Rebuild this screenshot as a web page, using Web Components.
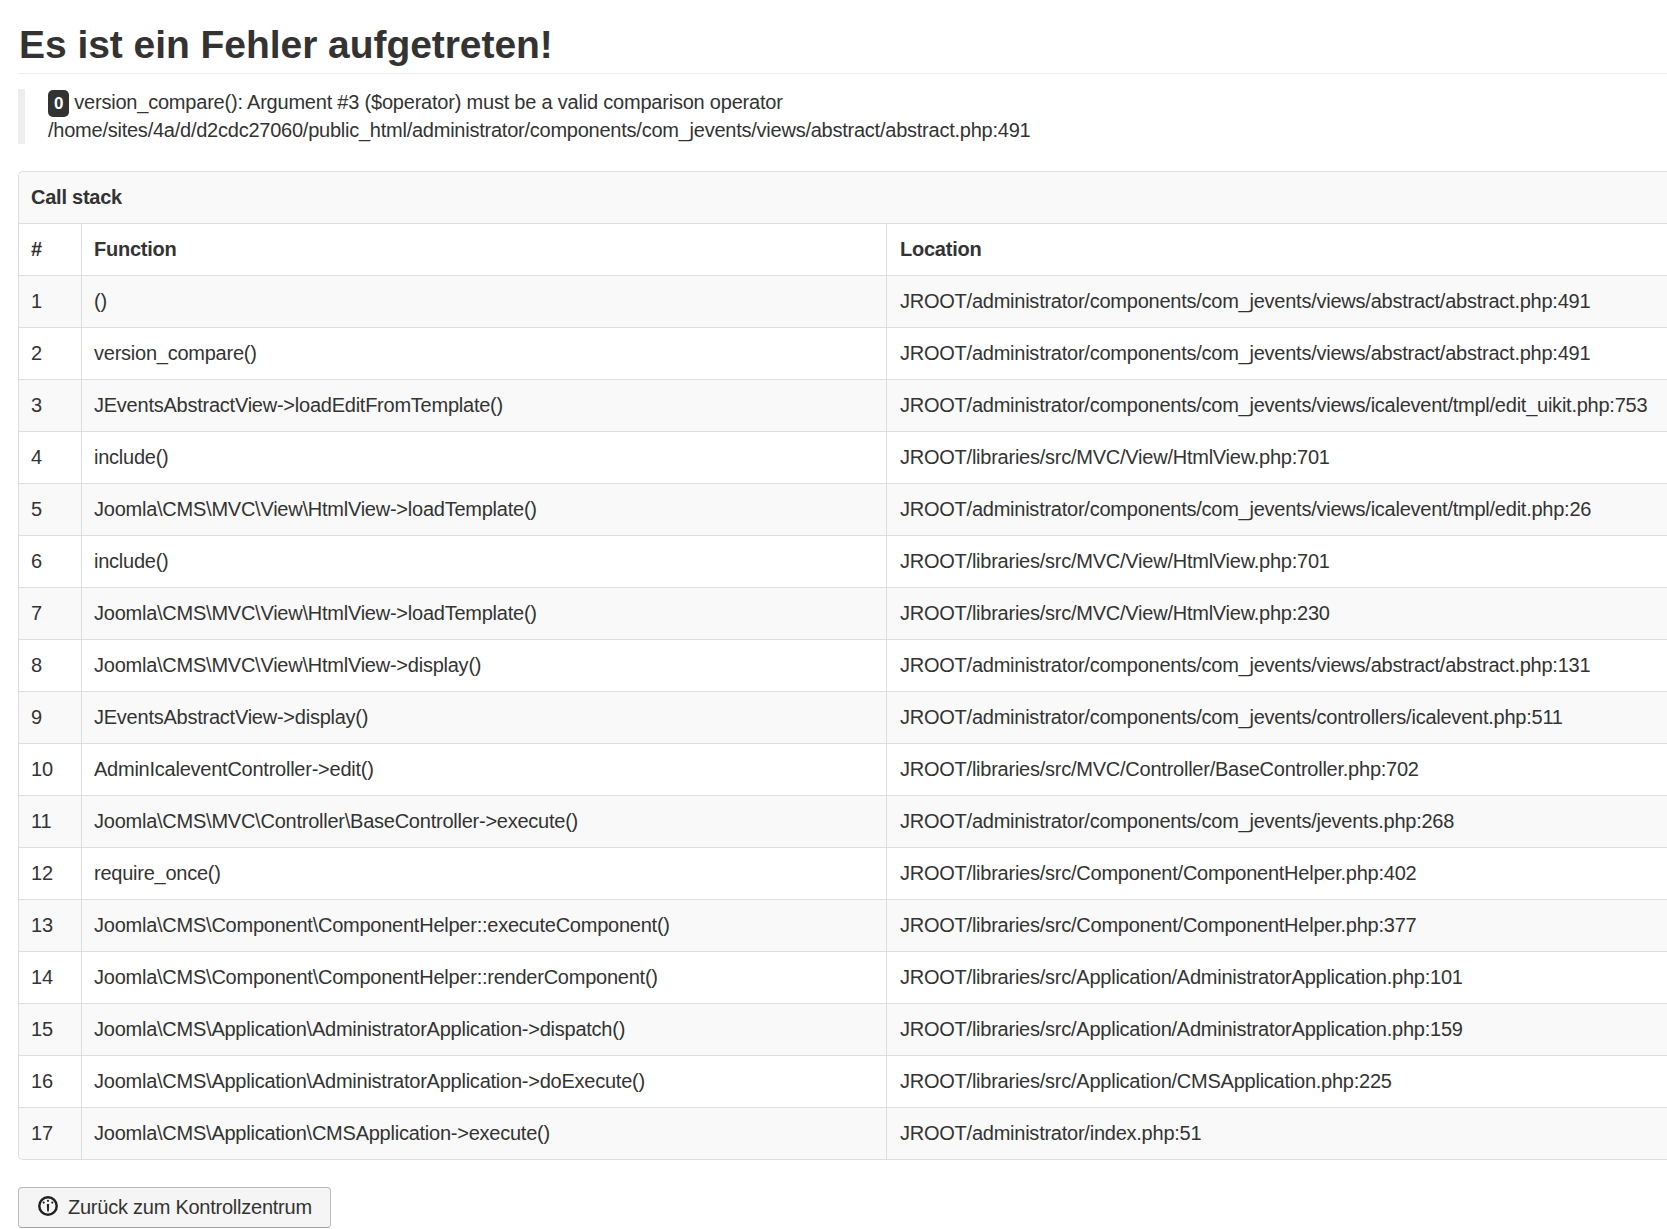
<!DOCTYPE html>
<html lang="de">
<head>
<meta charset="utf-8">
<title>Fehler</title>
<style>
  html { overflow: hidden; }
  body { margin: 0; padding: 0 0 0 18px; width: 1900px; background: #fff; color: #333; font-family: "Liberation Sans", Arial, sans-serif; font-size: 20px; line-height: 27px; letter-spacing: -0.24px; }
</style>
</head>
<body>
<error-heading>Es ist ein Fehler aufgetreten!</error-heading>
<error-message code="0" file="/home/sites/4a/d/d2cdc27060/public_html/administrator/components/com_jevents/views/abstract/abstract.php:491">version_compare(): Argument #3 ($operator) must be a valid comparison operator</error-message>
<call-stack title="Call stack">
  <stack-row head num="#" fn="Function" loc="Location"></stack-row>
  <stack-row odd num="1" fn="()" loc="JROOT/administrator/components/com_jevents/views/abstract/abstract.php:491"></stack-row>
  <stack-row num="2" fn="version_compare()" loc="JROOT/administrator/components/com_jevents/views/abstract/abstract.php:491"></stack-row>
  <stack-row odd num="3" fn="JEventsAbstractView->loadEditFromTemplate()" loc="JROOT/administrator/components/com_jevents/views/icalevent/tmpl/edit_uikit.php:753"></stack-row>
  <stack-row num="4" fn="include()" loc="JROOT/libraries/src/MVC/View/HtmlView.php:701"></stack-row>
  <stack-row odd num="5" fn="Joomla\CMS\MVC\View\HtmlView->loadTemplate()" loc="JROOT/administrator/components/com_jevents/views/icalevent/tmpl/edit.php:26"></stack-row>
  <stack-row num="6" fn="include()" loc="JROOT/libraries/src/MVC/View/HtmlView.php:701"></stack-row>
  <stack-row odd num="7" fn="Joomla\CMS\MVC\View\HtmlView->loadTemplate()" loc="JROOT/libraries/src/MVC/View/HtmlView.php:230"></stack-row>
  <stack-row num="8" fn="Joomla\CMS\MVC\View\HtmlView->display()" loc="JROOT/administrator/components/com_jevents/views/abstract/abstract.php:131"></stack-row>
  <stack-row odd num="9" fn="JEventsAbstractView->display()" loc="JROOT/administrator/components/com_jevents/controllers/icalevent.php:511"></stack-row>
  <stack-row num="10" fn="AdminIcaleventController->edit()" loc="JROOT/libraries/src/MVC/Controller/BaseController.php:702"></stack-row>
  <stack-row odd num="11" fn="Joomla\CMS\MVC\Controller\BaseController->execute()" loc="JROOT/administrator/components/com_jevents/jevents.php:268"></stack-row>
  <stack-row num="12" fn="require_once()" loc="JROOT/libraries/src/Component/ComponentHelper.php:402"></stack-row>
  <stack-row odd num="13" fn="Joomla\CMS\Component\ComponentHelper::executeComponent()" loc="JROOT/libraries/src/Component/ComponentHelper.php:377"></stack-row>
  <stack-row num="14" fn="Joomla\CMS\Component\ComponentHelper::renderComponent()" loc="JROOT/libraries/src/Application/AdministratorApplication.php:101"></stack-row>
  <stack-row odd num="15" fn="Joomla\CMS\Application\AdministratorApplication->dispatch()" loc="JROOT/libraries/src/Application/AdministratorApplication.php:159"></stack-row>
  <stack-row num="16" fn="Joomla\CMS\Application\AdministratorApplication->doExecute()" loc="JROOT/libraries/src/Application/CMSApplication.php:225"></stack-row>
  <stack-row odd last num="17" fn="Joomla\CMS\Application\CMSApplication->execute()" loc="JROOT/administrator/index.php:51"></stack-row>
</call-stack>
<back-button>Zurück zum Kontrollzentrum</back-button>

<script>
  class ErrorHeading extends HTMLElement {
    constructor() {
      super();
      this.attachShadow({ mode: "open" });
      this.shadowRoot.innerHTML = `
        <style>
          :host { display: block; width: 1649px; height: 73px; border-bottom: 1px solid #eee; box-sizing: content-box; }
          h1 { margin: 0; padding: 0 0 0 1px; font-size: 39px; font-weight: bold; line-height: 90px; color: #333; letter-spacing: -0.05px; }
        </style>
        <h1><slot></slot></h1>
      `;
    }
  }
  customElements.define("error-heading", ErrorHeading);

  class ErrorMessage extends HTMLElement {
    constructor() {
      super();
      this.attachShadow({ mode: "open" });
      this.shadowRoot.innerHTML = `
        <style>
          :host { display: block; margin-top: 15px; padding-left: 23px; border-left: 7px solid #eee; height: 55px; line-height: 27.5px; }
          .badge { display: inline-block; vertical-align: baseline; background: #333; color: #fff; font-weight: bold; font-size: 17px; line-height: 27px; padding: 0 6px; border-radius: 5px; margin-right: 5px; }
          .line { display: block; white-space: nowrap; }
          .msg { letter-spacing: -0.21px; }
        </style>
        <span class="line msg"><span class="badge"></span><slot></slot></span>
        <span class="line file"></span>
      `;
    }
    connectedCallback() {
      this.shadowRoot.querySelector(".badge").textContent = this.getAttribute("code");
      this.shadowRoot.querySelector(".file").textContent = this.getAttribute("file");
    }
  }
  customElements.define("error-message", ErrorMessage);

  class CallStack extends HTMLElement {
    constructor() {
      super();
      this.attachShadow({ mode: "open" });
      this.shadowRoot.innerHTML = `
        <style>
          :host { display: block; margin-top: 27px; border: 1px solid #ddd; border-right: 0; border-radius: 5px 0 0 5px; }
          .title { height: 51px; line-height: 51px; padding-left: 12px; background: #f9f9f9; font-weight: bold; border-radius: 5px 0 0 0; }
        </style>
        <div class="title"></div>
        <slot></slot>
      `;
    }
    connectedCallback() {
      this.shadowRoot.querySelector(".title").textContent = this.getAttribute("title");
    }
  }
  customElements.define("call-stack", CallStack);

  class StackRow extends HTMLElement {
    constructor() {
      super();
      this.attachShadow({ mode: "open" });
      this.shadowRoot.innerHTML = `
        <style>
          :host { display: grid; grid-template-columns: 62px 805px 1fr; height: 52px; box-sizing: border-box; border-top: 1px solid #ddd; background: #fff; }
          :host([odd]) { background: #f9f9f9; }
          :host([head]) { font-weight: bold; }
          :host([last]) { border-radius: 0 0 0 5px; }
          div { padding: 12px 12px 0; white-space: nowrap; box-sizing: border-box; }
          div + div { border-left: 1px solid #ddd; }
          .loc { padding-left: 13px; }
        </style>
        <div class="num"></div><div class="fn"></div><div class="loc"></div>
      `;
    }
    connectedCallback() {
      for (const k of ["num", "fn", "loc"]) {
        this.shadowRoot.querySelector("." + k).textContent = this.getAttribute(k);
      }
    }
  }
  customElements.define("stack-row", StackRow);

  class BackButton extends HTMLElement {
    constructor() {
      super();
      this.attachShadow({ mode: "open" });
      this.shadowRoot.innerHTML = `
        <style>
          :host { display: flex; align-items: center; width: 313px; height: 41px; box-sizing: border-box; margin-top: 27px; padding: 0 0 1px 19px; gap: 10px; border: 1px solid #bbb; border-bottom-color: #a2a2a2; border-radius: 4px; background: #f5f5f5; white-space: nowrap; }
          svg { width: 20px; height: 20px; flex: none; margin-top: -3px; }
        </style>
        <svg viewBox="0 0 20 20">
          <circle cx="10" cy="10" r="8.7" fill="none" stroke="#222" stroke-width="2.5"/>
          <circle cx="10" cy="4.8" r="1.1" fill="#222"/>
          <circle cx="5.7" cy="6.6" r="1.1" fill="#222"/>
          <circle cx="14.3" cy="6.6" r="1.1" fill="#222"/>
          <path d="M8.8 8h2.4l-.4 7.5h-1.6z" fill="#222"/>
        </svg>
        <span><slot></slot></span>
      `;
    }
  }
  customElements.define("back-button", BackButton);
</script>
</body>
</html>
